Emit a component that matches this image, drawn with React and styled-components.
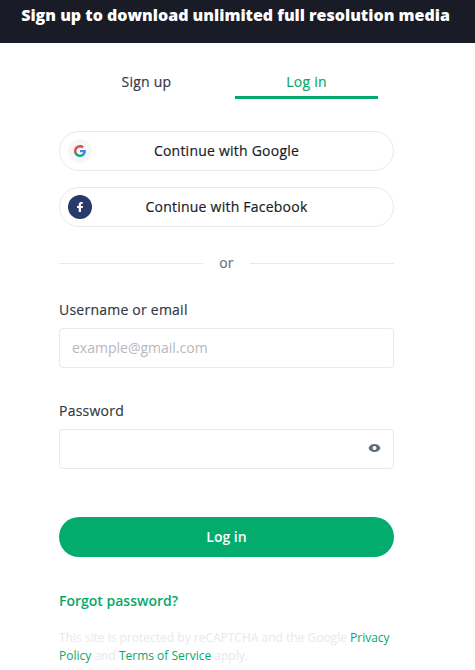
import React from "react";
import styled, { createGlobalStyle, css } from "styled-components";

const GlobalStyle = createGlobalStyle`
  * {
    box-sizing: border-box;
  }
  body {
    margin: 0;
    background-color: #ffffff;
    font-family: "Open Sans", "Noto Sans", sans-serif;
  }
`;

// Open Sans has no medium cut here, so thicken the regular one
const mediumText = css`
  font-size: 14px;
  font-weight: 400;
  line-height: 20px;
  letter-spacing: 0.23px;
  -webkit-text-stroke: 0.18px currentColor;
`;

const Container = styled.div`
  height: 670px;
  overflow: hidden;
  background-color: white;
`;
const Banner = styled.header`
  height: 43px;
  padding-top: 3px;
  padding-right: 4px;
  background-color: #191b26;
`;
const BannerTitle = styled.h1`
  margin: 0;
  font-size: 16px;
  font-weight: 800;
  line-height: 24px;
  text-align: center;
  white-space: nowrap;
  color: white;
`;
const Wrapper = styled.main`
  width: 335px;
  margin-left: 59px;
`;
const Tabs = styled.nav`
  display: flex;
  gap: 17px;
  padding: 24px 16px 0 16px;
`;
const Tab = styled.button`
  flex: 1;
  height: 32px;
  padding: 0;
  border: none;
  border-bottom: 3px solid ${(props) => (props.$active ? "#05a96b" : "transparent")};
  background: none;
  font-family: inherit;
  ${mediumText}
  color: ${(props) => (props.$active ? "#05a96b" : "#343844")};
`;
const SocialList = styled.div`
  display: flex;
  flex-direction: column;
  gap: 16px;
  margin-top: 32px;
`;
const SocialButton = styled.button`
  display: flex;
  align-items: center;
  height: 40px;
  padding: 0 32px 0 8px;
  border: 1px solid #e8e9ea;
  border-radius: 20px;
  background-color: white;
  font-family: inherit;
  color: #191b26;
`;
const SocialIcon = styled.span`
  display: flex;
  align-items: center;
  justify-content: center;
  width: 24px;
  height: 24px;
  border-radius: 50%;
  background-color: ${(props) => props.$color};
`;
const SocialLabel = styled.span`
  flex: 1;
  ${mediumText}
`;
const Divider = styled.div`
  display: flex;
  align-items: center;
  gap: 16px;
  height: 20px;
  margin-top: 26px;
  ${mediumText}
  color: #677380;
`;
const Line = styled.span`
  flex: 1;
  height: 1px;
  background-color: #e8e9ea;
`;
const Field = styled.div`
  display: flex;
  flex-direction: column;
  margin-top: ${(props) => props.$top}px;
`;
const Label = styled.label`
  margin-bottom: 8px;
  ${mediumText}
  color: #343844;
`;
const InputBox = styled.div`
  display: flex;
  align-items: center;
  height: 40px;
  padding: 0 12px;
  border: 1px solid #e8e9ea;
  border-radius: 4px;
`;
const Input = styled.input`
  flex: 1;
  min-width: 0;
  padding: 0;
  border: none;
  outline: none;
  background: none;
  font-family: inherit;
  font-size: 14px;
  line-height: 20px;
  color: #343844;

  &::placeholder {
    color: #b5b9bf;
  }
`;
const SubmitButton = styled.button`
  display: block;
  width: 100%;
  height: 40px;
  margin-top: 48px;
  padding: 0;
  border: none;
  border-radius: 20px;
  background-color: #03ac6c;
  font-family: inherit;
  font-size: 14px;
  font-weight: 600;
  line-height: 20px;
  color: white;
`;
const ForgotLink = styled.a`
  display: block;
  margin-top: 34px;
  font-size: 14px;
  font-weight: 600;
  line-height: 20px;
  color: #05a96b;
`;
const Legal = styled.p`
  margin: 18px 0 0;
  font-size: 12px;
  line-height: 18px;
  white-space: nowrap;
  color: #e8e9ea;
`;
const LegalLink = styled.a`
  color: #05a96b;
`;

const GoogleLogo = () => (
  <svg width="12" height="12" viewBox="0 0 48 48">
    <path fill="#4285f4" d="M47.500 24.500c0-1.600-.1-3.200-.4-4.700H24v9h12.900c-.6 3-2.200 5.500-4.800 7.200v6h7.700c4.600-4.200 7.700-10.400 7.700-17.500z" />
    <path fill="#03ac6c" d="M24 48c6.500 0 11.900-2.100 15.900-5.800l-7.700-6c-2.200 1.400-4.900 2.300-8.200 2.300-6.300 0-11.600-4.200-13.500-9.900h-8v6.200C6.500 42.600 14.600 48 24 48z" />
    <path fill="#e04a4a" d="M10.500 28.600c-.5-1.500-.8-3-.8-4.600s.3-3.100.8-4.600v-6.200h-8C.9 16.400 0 20.100 0 24s.9 7.600 2.500 10.800l8-6.200z" />
    <path fill="#e04a4a" d="M24 9.500c3.500 0 6.700 1.200 9.200 3.600l6.900-6.900C35.900 2.400 30.500 0 24 0 14.600 0 6.500 5.400 2.500 13.200l8 6.200C12.400 13.700 17.700 9.500 24 9.500z" />
  </svg>
);

const FacebookLogo = () => (
  <svg width="12" height="12" viewBox="0 0 12 12">
    <path fill="white" d="M4.700 11V6.900H3V4.900h1.700V3.700C4.700 1.900 5.700 1 7.400 1c.5 0 1 .1 1.400.1v1.700H7.900c-.7 0-.9.400-.9.900v1.200h2l-.3 2H7V11z" />
  </svg>
);

const EyeIcon = () => (
  <svg width="13" height="14" viewBox="0 0 13 14">
    <path
      fill="#5f6b7a"
      fillRule="evenodd"
      d="M6.500 1.900c2.900 0 5 1.600 6 4.100-1 2.500-3.100 4.100-6 4.100S1.500 8.500.5 6c1-2.500 3.100-4.100 6-4.100zm0 2.100a2 2 0 1 0 0 4 2 2 0 0 0 0-4z"
    />
  </svg>
);

const App = () => {
  return (
    <Container>
      <GlobalStyle />
      <Banner>
        <BannerTitle>Sign up to download unlimited full resolution media</BannerTitle>
      </Banner>
      <Wrapper>
        <Tabs>
          <Tab>Sign up</Tab>
          <Tab $active>Log in</Tab>
        </Tabs>
        <SocialList>
          <SocialButton>
            <SocialIcon $color="#f6f6f6">
              <GoogleLogo />
            </SocialIcon>
            <SocialLabel>Continue with Google</SocialLabel>
          </SocialButton>
          <SocialButton>
            <SocialIcon $color="#293a69">
              <FacebookLogo />
            </SocialIcon>
            <SocialLabel>Continue with Facebook</SocialLabel>
          </SocialButton>
        </SocialList>
        <Divider>
          <Line />
          or
          <Line />
        </Divider>
        <Field $top={27}>
          <Label htmlFor="email">Username or email</Label>
          <InputBox>
            <Input id="email" type="text" placeholder="example@gmail.com" />
          </InputBox>
        </Field>
        <Field $top={33}>
          <Label htmlFor="password">Password</Label>
          <InputBox>
            <Input id="password" type="password" />
            <EyeIcon />
          </InputBox>
        </Field>
        <SubmitButton>Log in</SubmitButton>
        <ForgotLink>Forgot password?</ForgotLink>
        <Legal>
          This site is protected by reCAPTCHA and the Google <LegalLink>Privacy</LegalLink>
          <br />
          <LegalLink>Policy</LegalLink> and <LegalLink>Terms of Service</LegalLink> apply.
        </Legal>
      </Wrapper>
    </Container>
  );
};

export default App;
